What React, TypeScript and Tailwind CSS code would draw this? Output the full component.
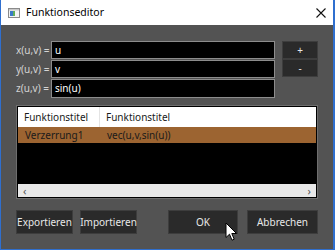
import React from 'react'

const font = { fontFamily: '"Noto Sans", "Liberation Sans", sans-serif' }

function TitleIcon() {
  return (
    <svg width="12" height="10" viewBox="0 0 12 10" className="shrink-0">
      <rect x="0.5" y="0.5" width="11" height="9" fill="#f4f4f4" stroke="#8a8a8a" />
      <rect x="1" y="1" width="10" height="1.5" fill="#c8c8c8" />
      <rect x="2" y="3" width="3" height="5" fill="#3a78c8" />
      <rect x="5" y="3" width="2" height="5" fill="#5fae5a" />
    </svg>
  )
}

function CloseIcon() {
  return (
    <svg width="10" height="10" viewBox="0 0 10 10">
      <path d="M0.5 0.5 L9.5 9.5 M9.5 0.5 L0.5 9.5" stroke="#111" strokeWidth="1.1" />
    </svg>
  )
}

function Cursor() {
  return (
    <svg width="13" height="20" viewBox="0 0 13 20" className="absolute left-[224px] top-[222px]">
      <path
        d="M1 1 L1 15.5 L4.5 12.2 L7 18.2 L9.2 17.2 L6.8 11.5 L11.5 11.5 Z"
        fill="#fff"
        stroke="#000"
        strokeWidth="1"
        strokeLinejoin="round"
      />
    </svg>
  )
}

const rows = [
  { label: 'x(u,v) =', value: 'u' },
  { label: 'y(u,v) =', value: 'v' },
  { label: 'z(u,v) =', value: 'sin(u)' },
]

function DarkButton({ children, className = '' }: { children: React.ReactNode; className?: string }) {
  return (
    <div
      className={
        'flex items-center justify-center whitespace-nowrap border border-[#3d3d3d] bg-[#2a2a2a] text-[10px] text-[#e8e8e8] ' +
        className
      }
    >
      {children}
    </div>
  )
}

export default function App() {
  return (
    <div
      className="relative flex h-[250px] w-[335px] flex-col overflow-hidden border-x border-b border-l-[#2f6fcf] border-r-[#2f6fcf] border-b-[#2f6fcf] border-r-2"
      style={font}
    >
      {/* title bar */}
      <div className="flex h-[25px] shrink-0 items-center bg-white pl-[7px] pr-[7px]">
        <TitleIcon />
        <span className="ml-[6px] text-[10.5px] text-black">Funktionseditor</span>
        <div className="ml-auto">
          <CloseIcon />
        </div>
      </div>

      {/* body */}
      <div className="flex flex-1 flex-col bg-[#535353] pl-[15px] pr-[15px] pt-[16px]">
        <div className="flex">
          <div className="flex flex-col gap-px">
            {rows.map((r, i) => (
              <div key={r.label} className="flex items-center">
                <span className="w-[35px] whitespace-nowrap text-[10px] text-[#d4d4d4]">{r.label}</span>
                <div
                  className={
                    'flex w-[224px] items-center border border-[#8c8c8c] bg-black pl-[3px] text-[10px] text-white ' +
                    (i === 2 ? 'h-[19px]' : 'h-[18px]')
                  }
                >
                  {r.value}
                </div>
              </div>
            ))}
          </div>
          <div className="ml-auto flex flex-col">
            <DarkButton className="h-[18px] w-[36px]">+</DarkButton>
            <DarkButton className="h-[18px] w-[36px]">-</DarkButton>
          </div>
        </div>

        {/* table */}
        <div className="mt-[7px] flex h-[94px] flex-col border border-[#6e6e6e] bg-black p-px">
          <div className="flex h-[20px] shrink-0 bg-white text-[10px] text-[#1a1a1a]">
            <div className="flex w-[82px] items-center border-r border-[#e4e4e4] pl-[6px]">Funktionstitel</div>
            <div className="flex items-center pl-[6px]">Funktionstitel</div>
          </div>
          <div className="flex h-[16px] shrink-0 bg-[#9c6431] text-[10px] text-[#1a1a1a]">
            <div className="flex w-[82px] items-center pl-[7px]">Verzerrung1</div>
            <div className="flex items-center pl-[7px]">vec(u,v,sin(u))</div>
          </div>
          <div className="flex-1" />
          <div className="flex h-[13px] shrink-0 items-center justify-between bg-[#e8e8e8] px-[5px] text-[11px] leading-none text-[#555]">
            <span>‹</span>
            <span>›</span>
          </div>
        </div>

        {/* buttons */}
        <div className="mt-[11px] flex">
          <DarkButton className="h-[24px] w-[57px]">Exportieren</DarkButton>
          <DarkButton className="ml-[7px] h-[24px] w-[57px]">Importieren</DarkButton>
          <DarkButton className="ml-auto h-[24px] w-[70px]">OK</DarkButton>
          <DarkButton className="ml-[9px] h-[24px] w-[71px]">Abbrechen</DarkButton>
        </div>
      </div>

      <Cursor />
    </div>
  )
}
